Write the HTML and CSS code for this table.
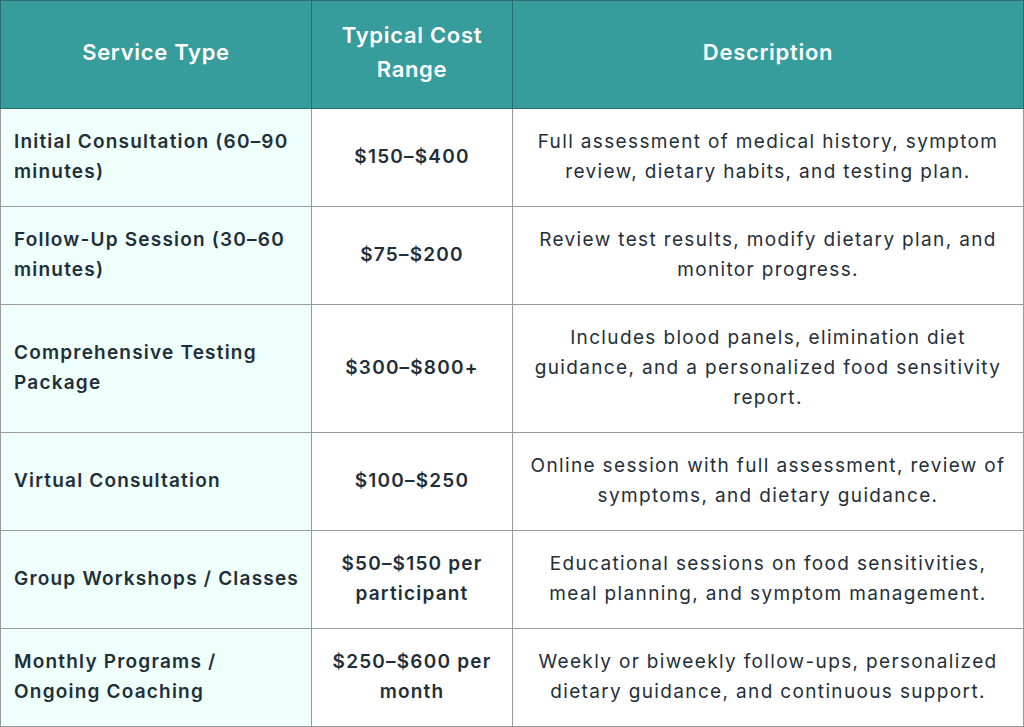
FILE: index.html
```html
<!DOCTYPE html>
<html lang="en">
<head>
<meta charset="utf-8">
<title>Service Costs</title>
<link rel="stylesheet" href="styles.css">
</head>
<body>
<table class="costs">
  <colgroup>
    <col class="c1">
    <col class="c2">
    <col class="c3">
  </colgroup>
  <thead>
    <tr>
      <th>Service Type</th>
      <th>Typical Cost<br>Range</th>
      <th>Description</th>
    </tr>
  </thead>
  <tbody>
    <tr>
      <td class="svc">Initial Consultation (60–90 minutes)</td>
      <td class="cost">$150–$400</td>
      <td class="desc">Full assessment of medical history, symptom review, dietary habits, and testing plan.</td>
    </tr>
    <tr>
      <td class="svc">Follow-Up Session (30–60 minutes)</td>
      <td class="cost">$75–$200</td>
      <td class="desc">Review test results, modify dietary plan, and monitor progress.</td>
    </tr>
    <tr>
      <td class="svc">Comprehensive Testing Package</td>
      <td class="cost">$300–$800+</td>
      <td class="desc">Includes blood panels, elimination diet guidance, and a personalized food sensitivity report.</td>
    </tr>
    <tr>
      <td class="svc">Virtual Consultation</td>
      <td class="cost">$100–$250</td>
      <td class="desc">Online session with full assessment, review of symptoms, and dietary guidance.</td>
    </tr>
    <tr>
      <td class="svc">Group Workshops / Classes</td>
      <td class="cost">$50–$150 per participant</td>
      <td class="desc">Educational sessions on food sensitivities, meal planning, and symptom management.</td>
    </tr>
    <tr>
      <td class="svc">Monthly Programs / Ongoing Coaching</td>
      <td class="cost">$250–$600 per month</td>
      <td class="desc">Weekly or biweekly follow-ups, personalized dietary guidance, and continuous support.</td>
    </tr>
  </tbody>
</table>
</body>
</html>
```
FILE: styles.css
```css
html, body {
  margin: 0;
  padding: 0;
  background: #ffffff;
}
body {
  font-family: "Inter", "Noto Sans", sans-serif;
  color: #1f2f3a;
}
.costs {
  width: 1023px;
  border-collapse: collapse;
  table-layout: fixed;
}
.c1 { width: 311px; }
.c2 { width: 201px; }
.c3 { width: 511px; }
.costs th {
  background: #379c9c;
  color: #ffffff;
  font-weight: 600;
  font-size: 22px;
  letter-spacing: 0.7px;
  line-height: 34px;
  height: 108px;
  padding: 0 10px 5px;
  border: 1px solid #2b6d6d;
  text-align: center;
  vertical-align: middle;
  box-sizing: border-box;
}
.costs td {
  border: 1px solid #9a9a9a;
  font-size: 19px;
  line-height: 30px;
  padding: 18px 13px 19px;
  vertical-align: middle;
}
.costs td.svc {
  background: #effffb;
  font-weight: 600;
  letter-spacing: 1.2px;
  text-align: left;
  padding-right: 8px;
}
.costs td.cost {
  font-weight: 600;
  letter-spacing: 1.2px;
  text-align: center;
  padding-left: 18px;
  padding-right: 18px;
}
.costs td.desc {
  font-weight: 400;
  letter-spacing: 1.35px;
  text-align: center;
  padding-left: 16px;
  padding-right: 16px;
}
```
